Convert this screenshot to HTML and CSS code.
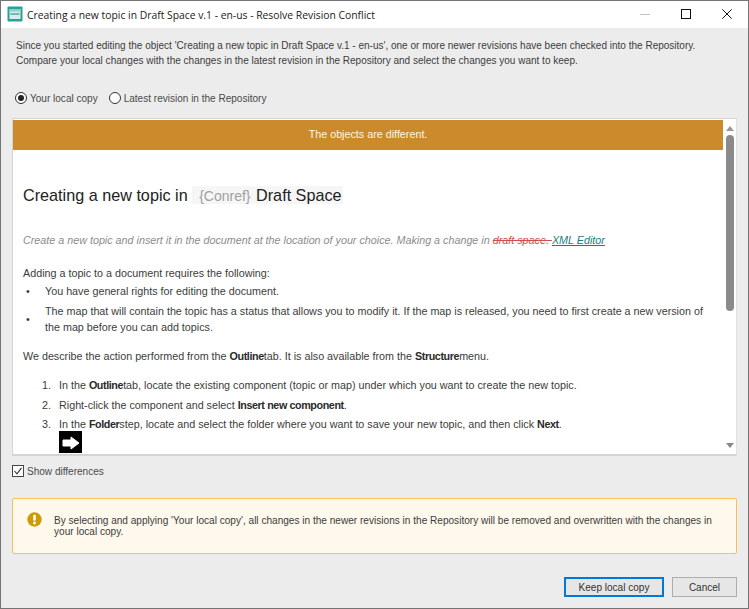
FILE: index.html
```html
<!DOCTYPE html>
<html lang="en">
<head>
<meta charset="utf-8">
<title>Resolve Revision Conflict</title>
<link rel="stylesheet" href="styles.css">
</head>
<body>
<div class="window">
  <header class="titlebar">
    <svg class="app-icon" width="16" height="16" viewBox="0 0 16 16"><rect x="0.5" y="0.5" width="15" height="15" rx="1" fill="#2aa198"/><rect x="2.5" y="3" width="11" height="10" fill="#d8ece8"/><rect x="2.5" y="3" width="11" height="2.5" fill="#8fcfc7"/><rect x="3.5" y="7" width="9" height="2" fill="#6fbcb4"/></svg>
    <span class="title-text">Creating a new topic in Draft Space v.1 - en-us - Resolve Revision Conflict</span>
    <div class="controls">
      <svg width="10" height="10" viewBox="0 0 10 10"><path d="M0 5.5H10" stroke="#c4c4c4" stroke-width="1"/></svg>
      <svg width="10" height="10" viewBox="0 0 10 10"><rect x="0.5" y="0.5" width="9" height="9" fill="none" stroke="#111" stroke-width="1"/></svg>
      <svg width="10" height="10" viewBox="0 0 10 10"><path d="M0.3 0.3L9.7 9.7M9.7 0.3L0.3 9.7" stroke="#111" stroke-width="1"/></svg>
    </div>
  </header>
  <main class="content">
    <p class="intro">Since you started editing the object 'Creating a new topic in Draft Space v.1 - en-us', one or more newer revisions have been checked into the Repository.<br>Compare your local changes with the changes in the latest revision in the Repository and select the changes you want to keep.</p>
    <div class="radios">
      <label class="radio"><span class="dot checked"></span>Your local copy</label>
      <label class="radio"><span class="dot"></span>Latest revision in the Repository</label>
    </div>
    <section class="viewer">
      <div class="doc">
        <div class="banner">The objects are different.</div>
        <h1 class="doc-title">Creating a new topic in <span class="conref"><span class="conref-mark">{Conref}</span> Draft Space</span></h1>
        <p class="short">Create a new topic and insert it in the document at the location of your choice. Making a change in <del class="removed">draft space. </del><a class="added">XML Editor</a></p>
        <p class="para-req">Adding a topic to a document requires the following:</p>
        <div class="bullet first"><span class="mark">•</span><span>You have general rights for editing the document.</span></div>
        <div class="bullet"><span class="mark">•</span><span>The map that will contain the topic has a status that allows you to modify it. If the map is released, you need to first create a new version of the map before you can add topics.</span></div>
        <p class="para-action">We describe the action performed from the <b>Outline</b>tab. It is also available from the <b>Structure</b>menu.</p>
        <div class="step s1"><span class="num">1.</span><span>In the <b>Outline</b>tab, locate the existing component (topic or map) under which you want to create the new topic.</span></div>
        <div class="step"><span class="num">2.</span><span>Right-click the component and select <b>Insert new component</b>.</span></div>
        <div class="step"><span class="num">3.</span><span>In the <b>Folder</b>step, locate and select the folder where you want to save your new topic, and then click <b>Next</b>.</span></div>
        <div class="arrow-box"><svg width="23" height="22" viewBox="0 0 23 22"><path d="M4 9H12V6L20 12L12 18V15H4Z" fill="#fff" stroke="#fff" stroke-width="1" stroke-linejoin="round"/></svg></div>
      </div>
      <div class="scrollbar">
        <svg width="10" height="6" viewBox="0 0 10 6"><path d="M1 6L5 1L9 6Z" fill="#999"/></svg>
        <div class="thumb"></div>
        <svg class="down" width="10" height="6" viewBox="0 0 10 6"><path d="M1 0L5 5L9 0Z" fill="#888"/></svg>
      </div>
    </section>
    <label class="check">
      <svg width="12" height="12" viewBox="0 0 12 12"><rect x="0.5" y="0.5" width="11" height="11" fill="#fff" stroke="#444"/><path d="M2.5 6L5 8.8L9.5 2.8" fill="none" stroke="#333" stroke-width="1.1"/></svg>
      Show differences
    </label>
    <div class="warning">
      <svg class="warn-icon" width="15" height="15" viewBox="0 0 15 15"><circle cx="7.5" cy="7.5" r="7.2" fill="#cf9a06"/><rect x="6.2" y="2.8" width="2.6" height="6" rx="1" fill="#fff"/><circle cx="7.5" cy="11" r="1.4" fill="#fff"/></svg>
      <p>By selecting and applying 'Your local copy', all changes in the newer revisions in the Repository will be removed and overwritten with the changes in your local copy.</p>
    </div>
    <div class="actions">
      <button class="btn primary">Keep local copy</button>
      <button class="btn">Cancel</button>
    </div>
  </main>
</div>
</body>
</html>
```
FILE: styles.css
```css
* { box-sizing: border-box; }
html, body { margin: 0; padding: 0; height: 100%; }
body { font-family: "Liberation Sans", Arial, sans-serif; font-size: 10.04px; color: #333; background: #ececec; overflow: hidden; }
p, h1 { margin: 0; }
.window { width: 749px; height: 609px; border: 1px solid #747474; display: flex; flex-direction: column; background: #ececec; }
.titlebar { height: 27px; background: #fff; display: flex; align-items: center; padding-left: 6px; flex: none; }
.app-icon { margin-right: 4px; margin-top: -1px; }
.title-text { font-family: "Open Sans", sans-serif; font-size: 10.35px; color: #1a1a1a; }
.controls { margin-left: auto; display: flex; gap: 31px; padding-right: 16px; align-items: center; margin-top: -1px; }
.content { flex: 1; display: flex; flex-direction: column; padding: 10px 11px 0 11px; }
.intro { padding-left: 4px; line-height: 15px; color: #3c3c3c; white-space: nowrap; font-size: 10.02px; }
.radios { display: flex; gap: 11px; margin-top: 22px; height: 16px; align-items: center; padding-left: 3px; }
.radio { display: flex; align-items: center; gap: 3px; color: #4a4a4a; }
.dot { width: 12px; height: 12px; border: 1px solid #333; border-radius: 50%; background: #fff; display: flex; align-items: center; justify-content: center; }
.dot.checked::after { content: ""; width: 6px; height: 6px; border-radius: 50%; background: #222; }
.viewer { margin-top: 12px; height: 338px; width: 725px; display: flex; background: #fff; border: 1px solid #d4d4d4; border-width: 1px 1px 2px 1px; border-right-color: #e2e2e2; flex: none; }
.doc { width: 710px; overflow: hidden; padding-top: 1px; font-size: 10.75px; }
.banner { height: 30px; background: #cb8b2c; color: #fff5e6; text-align: center; line-height: 29px; }
.doc-title { font-size: 16.2px; font-weight: 400; color: #222; margin: 35px 0 0 10px; line-height: 20px; }
.conref { background: #f6f6f6; padding: 0 1px 0 7px; }
.conref-mark { color: #a0a0a0; font-size: 14px; margin-right: 1px; }
.short { margin: 27px 0 0 10px; font-style: italic; color: #8c8c8c; line-height: 15px; }
.removed { color: #d05050; }
.added { color: #15807e; text-decoration: underline; }
.para-req { margin: 18px 0 0 10px; line-height: 15px; color: #3c3c3c; }
.bullet { display: flex; align-items: center; margin: 4px 0 0 13px; line-height: 16px; color: #3c3c3c; padding-right: 16px; }
.bullet.first { margin-top: 2px; }
.mark { width: 19px; flex: none; }
.para-action { margin: 14px 0 0 10px; line-height: 15px; color: #3c3c3c; }
.step { display: flex; margin-top: 4.5px; padding-left: 29px; line-height: 15px; color: #3c3c3c; }
.step.s1 { margin-top: 14px; }
.num { width: 17px; flex: none; }
b { color: #2a2a2a; font-weight: 700; letter-spacing: -0.4px; }
.arrow-box { width: 23px; height: 22px; background: #000; margin: -1px 0 0 46px; }
.arrow-box svg { display: block; }
.scrollbar { flex: 1; display: flex; flex-direction: column; align-items: center; padding-top: 6px; background: #fff; }
.thumb { width: 8px; height: 176px; margin-top: 4px; border-radius: 4px; background: #8a8a8a; }
.down { margin-top: auto; margin-bottom: 5px; }
.check { display: flex; align-items: center; gap: 3px; margin-top: 7px; height: 16px; color: #4a4a4a; }
.warning { margin-top: 19px; height: 56px; width: 725px; background: #fff8ec; border: 1px solid #f9bf5c; border-radius: 2px; display: flex; align-items: flex-start; padding: 13px 0 0 14px; flex: none; }
.warn-icon { flex: none; }
.warning p { margin: 3px 0 0 12px; line-height: 11px; color: #3c3c3c; width: 670px; font-size: 10.08px; }
.actions { margin-top: 23px; display: flex; justify-content: flex-end; gap: 8px; width: 725px; }
.btn { width: 65px; height: 20px; background: #e6e6e6; border: 1px solid #adadad; font: 10.04px "Liberation Sans", Arial, sans-serif; color: #333; padding: 0; }
.btn.primary { width: 100px; border: 1px solid #0078d7; outline: 1px solid #0078d7; outline-offset: -2px; }
```
